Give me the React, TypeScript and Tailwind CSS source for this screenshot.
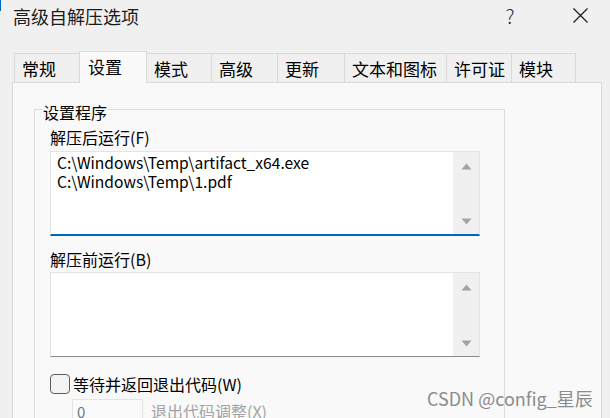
import React from 'react';

const tabs: { label: string; cls: string; active?: boolean }[] = [
  { label: '常规', cls: 'w-[65px] border-l' },
  { label: '设置', cls: 'w-[68px] border-l border-r', active: true },
  { label: '模式', cls: 'w-[64px]' },
  { label: '高级', cls: 'w-[66px] border-l' },
  { label: '更新', cls: 'w-[67px] border-l' },
  { label: '文本和图标', cls: 'w-[102px] border-l' },
  { label: '许可证', cls: 'w-[65px] border-l' },
  { label: '模块', cls: 'w-[65px] border-l border-r' },
];

function Arrow({ down }: { down?: boolean }) {
  return (
    <svg width="11" height="7" viewBox="0 0 11 7" className="block">
      {down ? (
        <path d="M0.5 0.5 H10.5 L5.5 6.5 Z" fill="#a3a3a3" />
      ) : (
        <path d="M5.5 0.5 L10.5 6.5 H0.5 Z" fill="#a3a3a3" />
      )}
    </svg>
  );
}

function Scrollbar() {
  return (
    <div className="w-[26px] bg-[#f0f0f0] flex flex-col items-center justify-between pt-[11px] pb-[9px]">
      <Arrow />
      <Arrow down />
    </div>
  );
}

export default function App() {
  return (
    <div className="relative w-[610px] h-[418px] overflow-hidden bg-[#f0f0f0] font-['Noto_Sans_CJK_SC',sans-serif] text-[#000]">
      <div className="absolute left-0 top-0 w-px h-[11px] bg-[#0067c0]" />
      {/* title bar */}
      <div className="h-[51px] flex items-start">
        <div className="pl-[13px] pt-[7px] text-[18px] leading-[18px] text-[#1b1b1b]">高级自解压选项</div>
        <div className="ml-auto flex items-start pt-[5px] pr-[22px]">
          <div className="w-[20px] text-center text-[20px] leading-[22px] font-light text-[#2b2b2b]">?</div>
          <div className="ml-[53px] pt-[3px]">
            <svg width="15" height="15" viewBox="0 0 15 15" className="block">
              <path d="M0.5 0.5 L14.5 14.5 M14.5 0.5 L0.5 14.5" stroke="#1f1f1f" strokeWidth="1.3" />
            </svg>
          </div>
        </div>
      </div>
      {/* tabs */}
      <div className="flex items-end h-[31px] pl-[14px]">
        {tabs.map((t) => (
          <div
            key={t.label}
            className={
              t.active
                ? `relative z-10 h-[32px] -mb-px bg-[#f9f9f9] border-t border-[#d9d9d9] pl-[8px] pt-[6px] text-[17px] leading-[17px] ${t.cls}`
                : `h-[29px] bg-[#f0f0f0] border-t border-[#d9d9d9] pl-[7px] pt-[6px] text-[17px] leading-[17px] ${t.cls}`
            }
          >
            {t.label}
          </div>
        ))}
      </div>
      {/* panel */}
      <div className="ml-[12px] w-[590px] h-[400px] bg-[#f9f9f9] border border-[#d9d9d9] pl-[21px] pt-[26px]">
        <div className="w-[471px] h-[360px] border border-[#dcdcdc] px-[15px] text-[16px] leading-[16px]">
          <div className="-mt-[6px] -ml-[8px] w-fit px-px bg-[#f9f9f9]">设置程序</div>
          <div className="mt-[9px]">解压后运行(F)</div>
          <div className="mt-[6px] w-[430px] h-[85px] bg-white flex border-t border-l border-r border-[#e3e3e3] border-b-2 border-b-[#0067c0]">
            <div className="flex-1 pl-[6px] pt-[1px] text-[15.6px] leading-[19px]">
              <div>C:\Windows\Temp\artifact_x64.exe</div>
              <div>C:\Windows\Temp\1.pdf</div>
            </div>
            <Scrollbar />
          </div>
          <div className="mt-[15px]">解压前运行(B)</div>
          <div className="mt-[5px] w-[430px] h-[85px] bg-white flex border-t border-l border-r border-[#e3e3e3] border-b border-b-[#8a8a8a]">
            <div className="flex-1" />
            <Scrollbar />
          </div>
          <div className="mt-[17px] flex items-center">
            <div className="w-[20px] h-[20px] rounded-[4px] border border-[#5f5f5f] bg-[#f3f3f3]" />
            <div className="ml-[3px]">等待并返回退出代码(W)</div>
          </div>
          <div className="mt-[5px] flex items-start">
            <div className="ml-[22px] w-[71px] h-[24px] border border-[#e3e3e3] bg-[#fafafa] pl-[4px] pt-[4px] text-[15px] leading-[16px] text-[#6f7680]">0</div>
            <div className="ml-[8px] pt-[4px] text-[#a3a3a3]">退出代码调整(X)</div>
          </div>
        </div>
      </div>
      <div className="absolute left-[427px] top-[388px] text-[18px] leading-[20px] text-[#8c8c8c]">CSDN @config_星辰</div>
    </div>
  );
}
